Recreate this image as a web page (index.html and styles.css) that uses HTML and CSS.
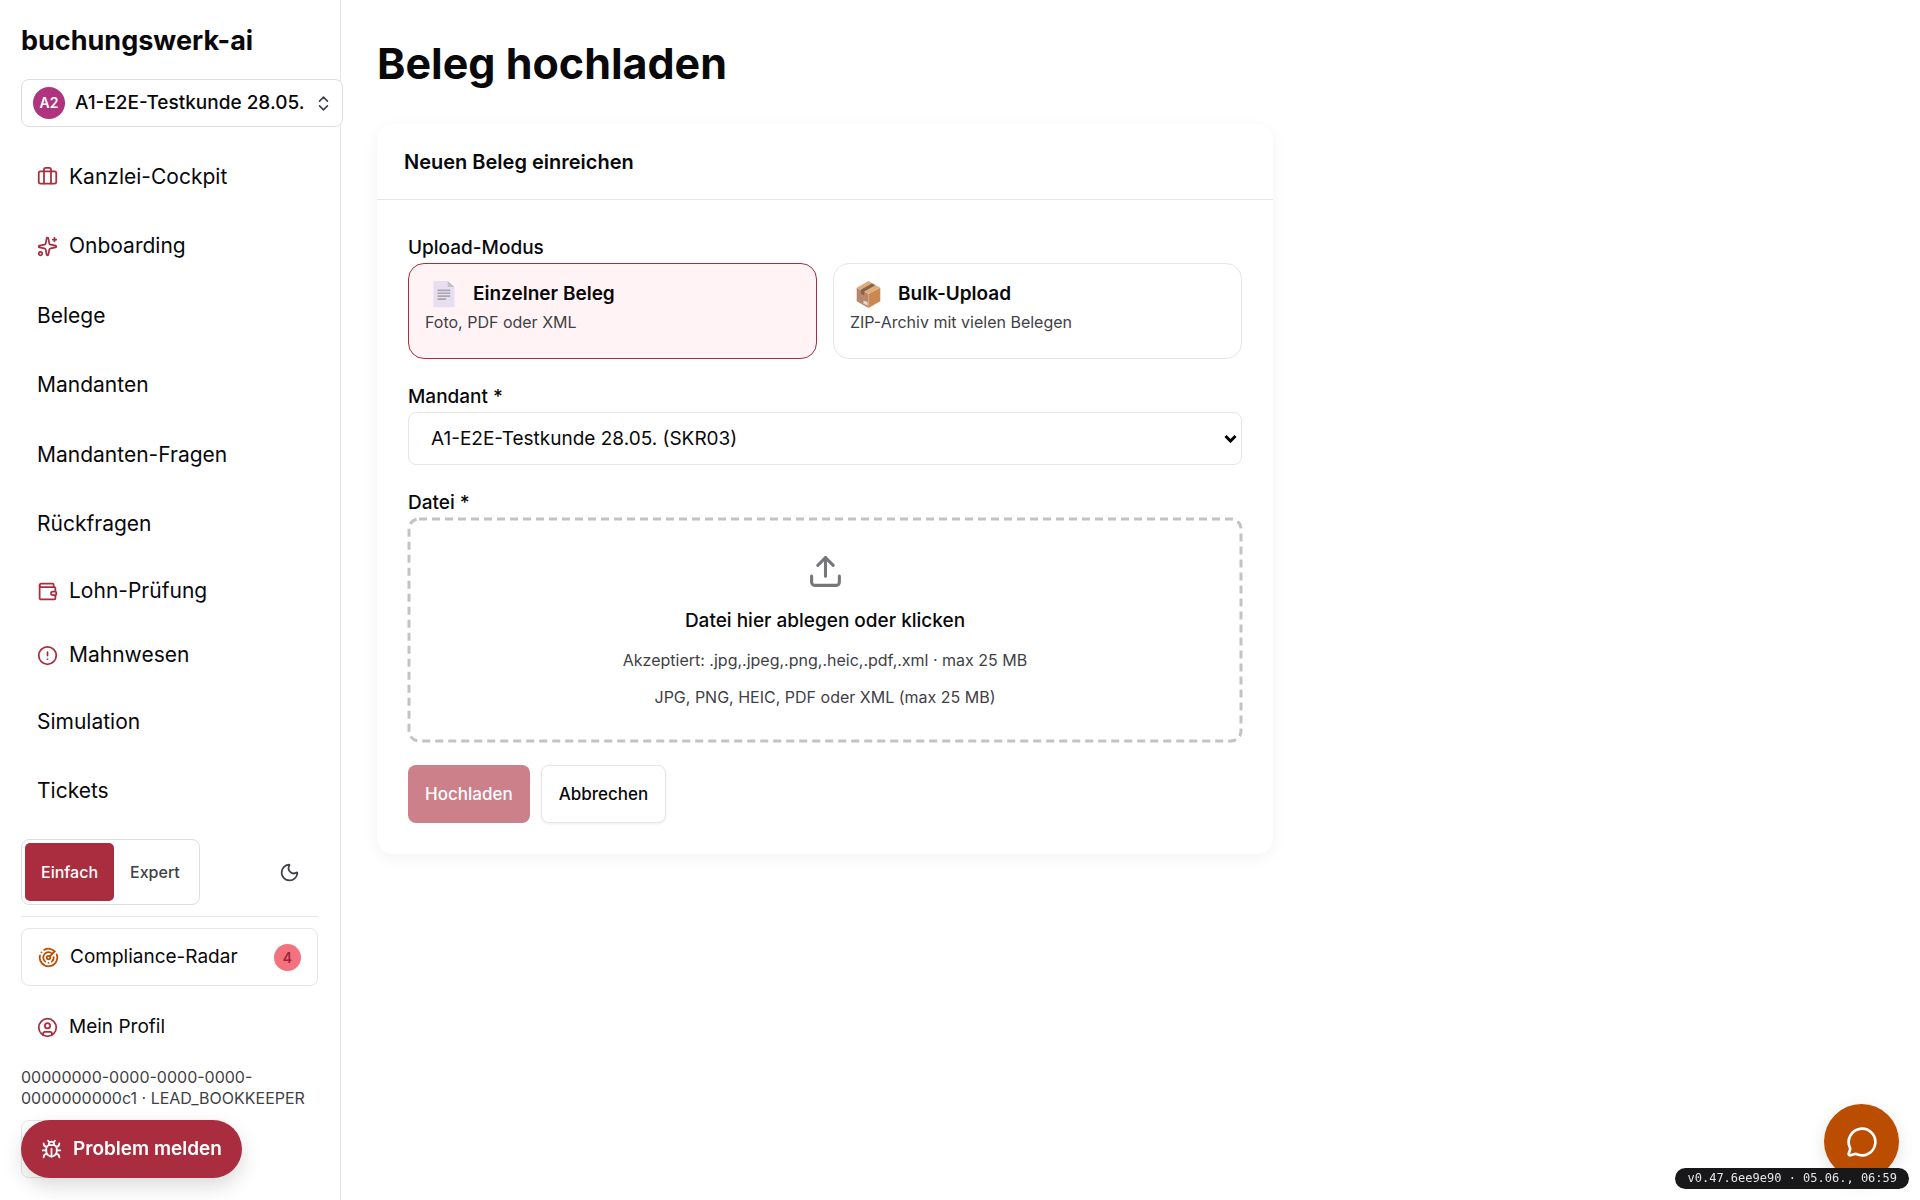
FILE: index.html
```html
<!DOCTYPE html>
<html lang="de">
<head>
  <meta charset="UTF-8">
  <meta name="viewport" content="width=device-width, initial-scale=1">
  <title>Beleg hochladen – buchungswerk-ai</title>
  <link rel="stylesheet" href="styles.css">
</head>
<body>
  <div class="layout">
    <aside class="sidebar">
      <div class="brand">buchungswerk-ai</div>
      <button type="button" class="tenant">
        <span class="avatar">A2</span>
        <span class="tenant-name">A1-E2E-Testkunde 28.05.</span>
        <svg class="icon icon-sm" viewBox="0 0 24 24"><path d="m7 15 5 5 5-5"/><path d="m7 9 5-5 5 5"/></svg>
      </button>

      <nav class="nav">
        <a href="#" class="nav-item">
          <svg class="icon" viewBox="0 0 24 24"><path d="M16 20V4a2 2 0 0 0-2-2h-4a2 2 0 0 0-2 2v16"/><rect width="20" height="14" x="2" y="6" rx="2"/></svg>
          Kanzlei-Cockpit
        </a>
        <a href="#" class="nav-item">
          <svg class="icon" viewBox="0 0 24 24"><path d="M11.017 2.814a1 1 0 0 1 1.966 0l1.051 5.558a2 2 0 0 0 1.594 1.594l5.558 1.051a1 1 0 0 1 0 1.966l-5.558 1.051a2 2 0 0 0-1.594 1.594l-1.051 5.558a1 1 0 0 1-1.966 0l-1.051-5.558a2 2 0 0 0-1.594-1.594l-5.558-1.051a1 1 0 0 1 0-1.966l5.558-1.051a2 2 0 0 0 1.594-1.594z"/><path d="M20 2v4"/><path d="M22 4h-4"/><circle cx="4" cy="20" r="2"/></svg>
          Onboarding
        </a>
        <a href="#" class="nav-item">Belege</a>
        <a href="#" class="nav-item">Mandanten</a>
        <a href="#" class="nav-item">Mandanten-Fragen</a>
        <a href="#" class="nav-item">Rückfragen</a>
        <a href="#" class="nav-item compact">
          <svg class="icon" viewBox="0 0 24 24"><path d="M19 7V4a1 1 0 0 0-1-1H5a2 2 0 0 0 0 4h15a1 1 0 0 1 1 1v4h-3a2 2 0 0 0 0 4h3a1 1 0 0 0 1-1v-2a1 1 0 0 0-1-1"/><path d="M3 5v14a2 2 0 0 0 2 2h15a1 1 0 0 0 1-1v-4"/></svg>
          Lohn-Prüfung
        </a>
        <a href="#" class="nav-item compact">
          <svg class="icon" viewBox="0 0 24 24"><circle cx="12" cy="12" r="10"/><path d="M12 8v4"/><path d="M12 16h.01"/></svg>
          Mahnwesen
        </a>
        <a href="#" class="nav-item">Simulation</a>
        <a href="#" class="nav-item">Tickets</a>
      </nav>

      <div class="mode-row">
        <div class="mode">
          <button type="button" class="mode-btn active">Einfach</button>
          <button type="button" class="mode-btn">Expert</button>
        </div>
        <button type="button" class="theme-btn" aria-label="Dunkles Design">
          <svg class="icon" viewBox="0 0 24 24"><path d="M20.985 12.486a9 9 0 1 1-9.473-9.472c.405-.022.617.46.402.803a6 6 0 0 0 8.268 8.268c.344-.215.825-.004.803.401"/></svg>
        </button>
      </div>

      <div class="account">
        <a href="#" class="radar">
          <svg class="icon" viewBox="0 0 24 24"><path d="M19.07 4.93A10 10 0 0 0 6.99 3.34"/><path d="M4 6h.01"/><path d="M2.29 9.62A10 10 0 1 0 21.31 8.35"/><path d="M16.24 7.76A6 6 0 1 0 8.23 16.67"/><path d="M12 18h.01"/><path d="M17.99 11.66A6 6 0 0 1 15.77 16.67"/><circle cx="12" cy="12" r="2"/><path d="m13.41 10.59 5.66-5.66"/></svg>
          Compliance-Radar
          <span class="badge">4</span>
        </a>
        <a href="#" class="profile">
          <svg class="icon" viewBox="0 0 24 24"><circle cx="12" cy="12" r="10"/><circle cx="12" cy="10" r="3"/><path d="M7 20.662V19a2 2 0 0 1 2-2h6a2 2 0 0 1 2 2v1.662"/></svg>
          Mein Profil
        </a>
        <p class="user-id">00000000-0000-0000-0000-0000000000c1 · LEAD_BOOKKEEPER</p>
        <button type="button" class="logout" aria-label="Abmelden"></button>
      </div>
    </aside>

    <main class="main">
      <h1>Beleg hochladen</h1>
      <section class="card">
        <h2 class="card-title">Neuen Beleg einreichen</h2>
        <form class="form">
          <div class="field" role="group" aria-labelledby="modus">
            <span class="label" id="modus">Upload-Modus</span>
            <div class="options">
              <button type="button" class="option selected">
                <span class="option-head">
                  <svg class="emoji" viewBox="0 0 32 32"><path fill="#e7dff0" d="M4 0h17l8 7v24H4z"/><path fill="#c3c0c4" d="M21 0l8 7h-8z"/><path stroke="#aaa6ab" stroke-width="2" d="M9 11h15M9 14.500h15M9 18h15M9 21.500h10"/></svg>
                  Einzelner Beleg
                </span>
                <span class="option-text">Foto, PDF oder XML</span>
              </button>
              <button type="button" class="option">
                <span class="option-head">
                  <svg class="emoji" viewBox="0 0 32 32"><path fill="#b8866b" d="M2 8l14 7v17L2 24z"/><path fill="#cb8850" d="M30 8l-14 7v17l14-8z"/><path fill="#dcae7c" d="M16 0l14 8-14 7L2 8z"/><path fill="#8a6049" d="M20 3l4 2L11 12.500V17l-4-2v-4.500z"/><path fill="#dfd9da" d="M10 23l5 2v4l-5-2z"/></svg>
                  Bulk-Upload
                </span>
                <span class="option-text">ZIP-Archiv mit vielen Belegen</span>
              </button>
            </div>
          </div>

          <div class="field">
            <label class="label" for="mandant">Mandant *</label>
            <div class="select-wrap">
              <select id="mandant" class="select">
                <option>A1-E2E-Testkunde 28.05. (SKR03)</option>
              </select>
              <svg class="select-arrow" viewBox="0 0 13 9"><path d="M1.500 2l5 5 5-5"/></svg>
            </div>
          </div>

          <div class="field">
            <label class="label" for="datei">Datei *</label>
            <label class="dropzone" for="datei">
              <svg class="dashes"><rect/></svg>
              <svg class="icon icon-lg" viewBox="0 0 24 24"><path d="M12 3v12"/><path d="m17 8-5-5-5 5"/><path d="M21 15v4a2 2 0 0 1-2 2H5a2 2 0 0 1-2-2v-4"/></svg>
              <span class="drop-title">Datei hier ablegen oder klicken</span>
              <span class="drop-hint">Akzeptiert: .jpg,.jpeg,.png,.heic,.pdf,.xml · max 25 MB</span>
              <span class="drop-hint">JPG, PNG, HEIC, PDF oder XML (max 25 MB)</span>
            </label>
            <input type="file" id="datei" hidden accept=".jpg,.jpeg,.png,.heic,.pdf,.xml">
          </div>

          <div class="actions">
            <button type="submit" class="btn primary" disabled>Hochladen</button>
            <button type="button" class="btn">Abbrechen</button>
          </div>
        </form>
      </section>
    </main>
  </div>

  <button type="button" class="report">
    <svg class="icon" viewBox="0 0 24 24"><path d="M12 20v-9"/><path d="M14 7a4 4 0 0 1 4 4v3a6 6 0 0 1-12 0v-3a4 4 0 0 1 4-4z"/><path d="M14.120 3.880 16 2"/><path d="M21 21a4 4 0 0 0-3.810-4"/><path d="M21 5a4 4 0 0 1-3.550 3.970"/><path d="M22 13h-4"/><path d="M3 21a4 4 0 0 1 3.810-4"/><path d="M3 5a4 4 0 0 0 3.550 3.970"/><path d="M6 13H2"/><path d="m8 2 1.880 1.880"/><path d="M9 7.130V6a3 3 0 1 1 6 0v1.130"/></svg>
    Problem melden
  </button>
  <button type="button" class="chat" aria-label="Chat öffnen">
    <svg class="icon icon-lg" viewBox="0 0 24 24"><path d="M2.992 16.342a2 2 0 0 1 .094 1.167l-1.065 3.290a1 1 0 0 0 1.236 1.168l3.413-.998a2 2 0 0 1 1.099.092 10 10 0 1 0-4.777-4.719"/></svg>
  </button>
  <div class="version">v0.47.6ee9e90 · 05.06., 06:59</div>
</body>
</html>
```

FILE: styles.css
```css
:root {
  --red: #a92d3e;
  --orange: #bb4d00;
  --text: #09090b;
  --muted: #3f3f46;
  --border: #e6e6e8;
}
* {
  box-sizing: border-box;
}
body {
  margin: 0;
  font-family: Inter, "Liberation Sans", sans-serif;
  font-size: 19px;
  line-height: 28px;
  color: var(--text);
  background: #fff;
}
a {
  color: inherit;
  text-decoration: none;
}
button, select {
  font: inherit;
  color: inherit;
  background: #fff;
  border: 1px solid var(--border);
  border-radius: 8px;
  cursor: pointer;
}
.icon {
  width: 21px;
  height: 21px;
  flex: none;
  fill: none;
  stroke: currentColor;
  stroke-width: 2;
  stroke-linecap: round;
  stroke-linejoin: round;
}
.icon-sm {
  width: 19px;
  height: 19px;
  color: var(--muted);
}
.icon-lg {
  width: 37px;
  height: 37px;
}

.layout {
  display: flex;
  min-height: 100vh;
}

/* Sidebar */
.sidebar {
  position: sticky;
  top: 0;
  display: flex;
  flex-direction: column;
  flex: none;
  width: 341px;
  height: 100vh;
  padding: 21px 22px 22px 21px;
  border-right: 1px solid var(--border);
}
.brand {
  font-size: 27px;
  line-height: 40px;
  font-weight: 700;
}
.tenant {
  display: flex;
  align-items: center;
  gap: 10px;
  align-self: flex-start;
  flex: none;
  height: 48px;
  margin: 18px 0 17px;
  padding: 0 9px 0 11px;
  border-color: #dedee0;
  white-space: nowrap;
  font-weight: 500;
}
.avatar {
  display: grid;
  place-items: center;
  width: 32px;
  height: 32px;
  border-radius: 50%;
  background: #b0337f;
  color: #fff;
  font-size: 14px;
  font-weight: 600;
}
.nav {
  display: flex;
  flex-direction: column;
  flex: 1;
  gap: 4px;
  font-size: 21px;
}
.nav-item {
  display: flex;
  align-items: center;
  gap: 11px;
  flex: 1;
  padding: 0 16px;
}
.nav-item.compact {
  flex: none;
  height: 60px;
}
.nav-item .icon, .profile .icon {
  color: var(--red);
}
.mode-row {
  display: flex;
  align-items: center;
  justify-content: space-between;
  padding: 15px 0 11px;
  border-bottom: 1px solid var(--border);
}
.mode {
  display: flex;
  padding: 3px;
  border: 1px solid #dedee0;
  border-radius: 8px;
}
.mode-btn {
  height: 58px;
  padding: 0 16px;
  border: 0;
  border-radius: 5px;
  font-size: 16px;
  font-weight: 500;
  color: var(--muted);
}
.mode-btn.active {
  background: var(--red);
  color: #fff;
}
.theme-btn {
  display: grid;
  place-items: center;
  width: 58px;
  height: 58px;
  border: 0;
  color: var(--muted);
}
.account {
  padding-top: 11px;
}
.radar, .profile {
  display: flex;
  align-items: center;
  gap: 11px;
  height: 58px;
  padding: 0 16px;
}
.radar {
  margin-bottom: 12px;
  border: 1px solid var(--border);
  border-radius: 8px;
}
.radar .icon {
  color: var(--orange);
}
.badge {
  display: grid;
  place-items: center;
  width: 27px;
  height: 27px;
  margin-left: auto;
  border-radius: 50%;
  background: #f3727e;
  color: #9c2638;
  font-size: 14px;
  font-weight: 600;
}
.user-id {
  margin: 11px 0;
  font-size: 16px;
  line-height: 21px;
  color: var(--muted);
}
.logout {
  display: block;
  width: 104px;
  height: 58px;
}

/* Main */
.main {
  flex: 1;
  min-width: 0;
  padding: 37px 36px;
}
h1 {
  margin: 0 0 34px;
  font-size: 43px;
  line-height: 53px;
  font-weight: 700;
}
.card {
  max-width: 896px;
  border-radius: 16px;
  box-shadow: 0 4px 16px rgba(0, 0, 0, 0.05);
}
.card-title {
  margin: 0;
  padding: 24px 27px 23px;
  border-bottom: 1px solid var(--border);
  font-size: 20px;
  font-weight: 600;
}
.form {
  display: flex;
  flex-direction: column;
  gap: 23px;
  padding: 33px 31px 31px;
}
.field {
  display: flex;
  flex-direction: column;
}
.label {
  line-height: 30px;
  font-weight: 500;
}
.options {
  display: grid;
  grid-template-columns: 1fr 1fr;
  gap: 16px;
}
.option {
  padding: 16px 16px 22px;
  border-radius: 16px;
  text-align: left;
}
.option.selected {
  border-color: var(--red);
  background: #fff3f5;
}
.option-head {
  display: flex;
  align-items: center;
  gap: 16px;
  font-weight: 600;
}
.emoji {
  width: 27px;
  height: 27px;
  margin-left: 5px;
}
.option-text {
  display: block;
  font-size: 16px;
  color: var(--muted);
}
.select-wrap {
  position: relative;
  display: grid;
}
.select {
  appearance: none;
  height: 53px;
  padding: 0 32px 0 22px;
}
.select-arrow {
  position: absolute;
  right: 5px;
  top: 22px;
  width: 13px;
  height: 9px;
  fill: none;
  stroke: #000;
  stroke-width: 3;
  pointer-events: none;
}
.dropzone {
  position: relative;
  display: flex;
  flex-direction: column;
  align-items: center;
  padding: 35px 35px 32px;
  cursor: pointer;
}
/* dashed frame, wider spaced than a css dashed border */
.dashes {
  position: absolute;
  inset: 0;
  width: 100%;
  height: 100%;
  overflow: visible;
}
.dashes rect {
  x: 1px;
  y: 1px;
  width: calc(100% - 2px);
  height: calc(100% - 2px);
  rx: 10px;
  fill: none;
  stroke: #c3c3c5;
  stroke-width: 3;
  stroke-dasharray: 8 5;
}
.dropzone .icon {
  color: #77777a;
}
.drop-title {
  margin: 17px 0 12px;
  font-weight: 500;
}
.drop-hint {
  font-size: 16px;
  line-height: 26px;
  color: var(--muted);
}
.drop-hint + .drop-hint {
  margin-top: 11px;
}
.actions {
  display: flex;
  gap: 11px;
}
.btn {
  height: 58px;
  padding: 0 17px;
  font-size: 17px;
  font-weight: 500;
  box-shadow: 0 1px 3px rgba(0, 0, 0, 0.08);
}
.btn.primary {
  border: 0;
  background: #cc808a;
  color: #fff;
  box-shadow: none;
}

/* Floating controls */
.report {
  position: fixed;
  left: 21px;
  bottom: 22px;
  display: flex;
  align-items: center;
  gap: 11px;
  height: 58px;
  padding: 0 20px;
  border: 0;
  border-radius: 29px;
  background: var(--red);
  color: #fff;
  font-weight: 600;
  box-shadow: 0 8px 20px rgba(0, 0, 0, 0.15);
}
.chat {
  position: fixed;
  right: 21px;
  bottom: 21px;
  display: grid;
  place-items: center;
  width: 75px;
  height: 75px;
  border: 0;
  border-radius: 50%;
  background: var(--orange);
  color: #fff;
  box-shadow: 0 5px 16px rgba(0, 0, 0, 0.12);
}
.chat .icon {
  width: 32px;
  height: 32px;
}
.version {
  position: fixed;
  right: 11px;
  bottom: 11px;
  padding: 0 12px;
  border-radius: 11px;
  background: #18181b;
  color: #e4e4e7;
  font: 12px/21px "DejaVu Sans Mono", monospace;
}
```
